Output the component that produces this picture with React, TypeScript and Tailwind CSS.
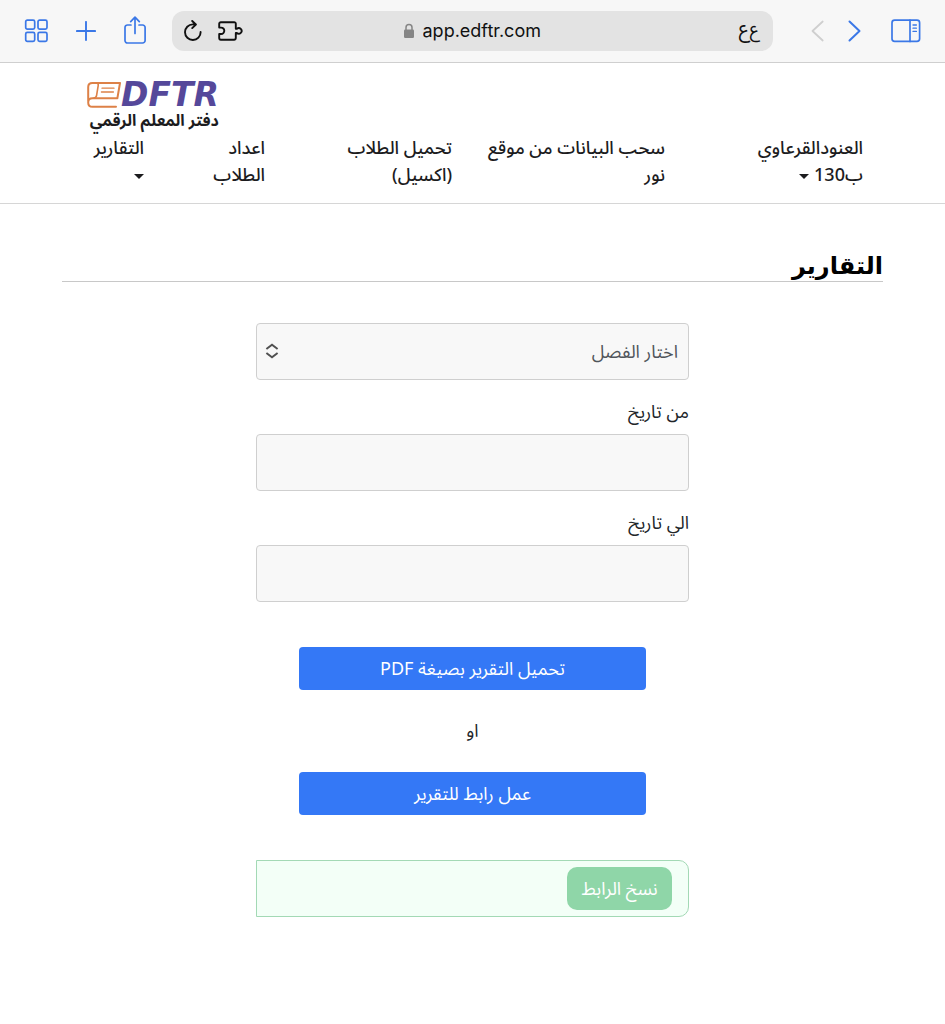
import type { ReactNode } from 'react';

const FieldLabel = ({ htmlFor, children }: { htmlFor: string; children: ReactNode }) => (
  <label htmlFor={htmlFor} className="block text-lg leading-6 text-[#212529] mt-5 mb-[10px]">
    {children}
  </label>
);

const Caret = () => (
  <span className="inline-block align-middle border-x-[5px] border-x-transparent border-t-[5px] border-t-[#1c1c1e]" />
);

const BrowserBar = () => {
  return (
    <div dir="ltr" className="flex items-center h-[63px] px-6 bg-[#f7f7f7] border-b border-[#cfcfcf] text-[#3b78e7]">
      {/* Left controls */}
      <button type="button" aria-label="Tabs">
        <svg width="24" height="24" viewBox="0 0 24 24" fill="none" stroke="currentColor" strokeWidth="1.7">
          <rect x="1.7" y="1.2" width="9" height="9" rx="1.6" />
          <rect x="14" y="1.2" width="9" height="9" rx="1.6" />
          <rect x="1.7" y="13.4" width="9" height="9" rx="1.6" />
          <rect x="14" y="13.4" width="9" height="9" rx="1.6" />
        </svg>
      </button>
      <button type="button" aria-label="New tab" className="ml-7">
        <svg width="20" height="20" viewBox="0 0 20 20" fill="none" stroke="currentColor" strokeWidth="1.9" strokeLinecap="round">
          <path d="M10 .9v18.2M.9 10h18.2" />
        </svg>
      </button>
      <button type="button" aria-label="Share" className="ml-7">
        <svg width="22" height="30" viewBox="0 0 22 30" fill="none" stroke="currentColor" strokeWidth="1.7" strokeLinecap="round" strokeLinejoin="round">
          <path d="M7 9H3.6A2.5 2.5 0 0 0 1 11.5v13A2.5 2.5 0 0 0 3.6 27h15a2.5 2.5 0 0 0 2.5-2.5v-13a2.5 2.5 0 0 0-2.5-2.5H15" />
          <path d="M11 17.5V1.4M6.7 5.6 11 1.2l4.3 4.4" />
        </svg>
      </button>

      {/* Address bar */}
      <div className="grid grid-cols-[1fr_auto_1fr] items-center flex-1 h-10 ml-[26px] px-3 rounded-xl bg-[#e3e3e3] text-[#111]">
        <div className="flex items-center gap-4">
          <button type="button" aria-label="Reload">
            <svg width="18" height="22" viewBox="0 0 18 22" fill="none" stroke="currentColor" strokeWidth="1.9" strokeLinecap="round" strokeLinejoin="round">
              <path d="M16.6 12A7.8 7.8 0 1 1 8.8 4.4h3M8.2 1l3.7 3.5-3.7 3.6" />
            </svg>
          </button>
          <button type="button" aria-label="Extensions">
            <svg width="25" height="20" viewBox="0 0 25 20" fill="none" stroke="currentColor" strokeWidth="1.9" strokeLinejoin="round">
              <path d="M1.2 6.6V2.8A1.6 1.6 0 0 1 2.8 1.2h13.4a1.6 1.6 0 0 1 1.6 1.6v5h1.1a2.8 2.8 0 1 1 0 4.2h-1.1v5.1a1.6 1.6 0 0 1-1.6 1.6H2.8a1.6 1.6 0 0 1-1.6-1.6V13h1.9a3 3 0 1 0 0-6.4z" />
            </svg>
          </button>
        </div>
        <div className="flex items-center gap-2">
          <svg width="12" height="16" viewBox="0 0 12 16" fill="none">
            <rect x="1" y="6.6" width="10" height="8.4" rx="1.2" fill="#858585" />
            <path d="M3 7V4.4a3 3 0 0 1 6 0V7" stroke="#858585" strokeWidth="1.5" />
          </svg>
          <input
            type="text"
            aria-label="Address"
            defaultValue="app.edftr.com"
            className="w-[120px] bg-transparent text-lg leading-6 font-[Inter,sans-serif] outline-none"
          />
        </div>
        <button type="button" dir="rtl" aria-label="Page settings" className="flex items-center gap-px pr-[2px] pb-1 justify-self-end leading-6">
          <span className="text-lg">ع</span>
          <span className="text-xl">ع</span>
        </button>
      </div>

      {/* Right controls */}
      <button type="button" aria-label="Back" className="ml-[38px] text-[#cfcfcf]">
        <svg width="13" height="22" viewBox="0 0 13 22" fill="none" stroke="currentColor" strokeWidth="1.8" strokeLinecap="round" strokeLinejoin="round">
          <path d="M11.7 1.5 1.5 11l10.2 9.5" />
        </svg>
      </button>
      <button type="button" aria-label="Forward" className="ml-6">
        <svg width="13" height="22" viewBox="0 0 13 22" fill="none" stroke="currentColor" strokeWidth="2" strokeLinecap="round" strokeLinejoin="round">
          <path d="M1.5 1.5 11.5 11l-10 9.5" />
        </svg>
      </button>
      <button type="button" aria-label="Sidebar" className="ml-[30px]">
        <svg width="30" height="24" viewBox="0 0 30 24" fill="none" stroke="currentColor" strokeWidth="1.7" strokeLinecap="round">
          <rect x="1" y="1.2" width="27.6" height="21.2" rx="2.6" />
          <path d="M19 1.2v21.2" />
          <path d="M22 6h3.4M22 9.2h3.4M22 12.4h3.4" strokeWidth="1.3" />
        </svg>
      </button>
    </div>
  );
};

const Logo = () => (
  <a href="#" aria-label="EDFTR" className="block w-fit">
    <span dir="ltr" className="flex items-center h-7">
      <svg width="34" height="28" viewBox="0 0 34 28" fill="none" stroke="#dd8147" strokeWidth="2" strokeLinecap="round" strokeLinejoin="round">
        <path d="M30.4 17.2 33 2H5.4Q1.2 2 1.2 6v14.4M30.4 17.2H5.4C2.6 17.2 1.2 19 1.2 21.4s1.5 4.4 4.2 4.4H29" />
        <path d="M9.2 2Q11.6 2 11.2 4.6L9.6 14.4Q9.2 17.2 6.4 17.2" strokeWidth="1.6" />
        <path d="M15 7.2h12M14.4 11h12" strokeWidth="1.3" />
      </svg>
      <span className="text-[33px] leading-7 font-bold italic text-[#55489a] font-['DejaVu_Sans',sans-serif]">DFTR</span>
    </span>
    <span className="block text-base leading-6 font-bold text-[#1c1c1e]">دفتر المعلم الرقمي</span>
  </a>
);

const navLinks = [
  { lines: ['سحب البيانات من موقع', 'نور'] },
  { lines: ['تحميل الطلاب', '(اكسيل)'] },
  { lines: ['اعداد', 'الطلاب'] },
];

const Header = () => {
  return (
    <header className="border-b border-[#d6d6d6] pt-[18px] pb-[14px] pr-[82px] pl-[87px]">
      <div className="flex justify-end">
        <Logo />
      </div>
      <nav className="grid grid-cols-[198fr_213fr_187fr_121fr_57fr] pt-[2px] text-lg leading-[27px] font-medium text-[#1c1c1e] whitespace-nowrap">
        <a href="#">
          العنودالقرعاوي
          <br />
          ب130 <Caret />
        </a>
        {navLinks.map((link) => (
          <a key={link.lines[0]} href="#">
            {link.lines[0]}
            <br />
            {link.lines[1]}
          </a>
        ))}
        <a href="#">
          التقارير
          <br />
          <Caret />
        </a>
      </nav>
    </header>
  );
};

const App = () => {
  return (
    <div dir="rtl" className="min-h-screen bg-white font-['Noto_Sans_Arabic','Noto_Sans','DejaVu_Sans',sans-serif]">
      <BrowserBar />
      <Header />

      <main className="px-[62px] pt-12">
        <h1 className="border-b border-[#c8c8c8] text-2xl leading-[29px] font-bold text-black font-['DejaVu_Sans',sans-serif]">
          التقارير
        </h1>

        <form className="w-full max-w-[433px] mx-auto pt-[41px]">
          <div className="relative">
            <select
              aria-label="اختار الفصل"
              className="appearance-none block w-full h-[57px] px-[10px] rounded border border-[#cfcfcf] bg-[#f8f8f8] text-lg text-[#50555b]"
            >
              <option>اختار الفصل</option>
            </select>
            <svg className="absolute left-[9px] top-5 pointer-events-none" width="14" height="16" viewBox="0 0 14 16" fill="none" stroke="#505050" strokeWidth="2">
              <path d="M1.4 6 7 1.8 12.6 6M1.4 10 7 14.2 12.6 10" />
            </svg>
          </div>

          <FieldLabel htmlFor="from">من تاريخ</FieldLabel>
          <input id="from" type="text" className="block w-full h-[57px] px-[10px] rounded border border-[#cfcfcf] bg-[#f8f8f8]" />

          <FieldLabel htmlFor="to">الي تاريخ</FieldLabel>
          <input id="to" type="text" className="block w-full h-[57px] px-[10px] rounded border border-[#cfcfcf] bg-[#f8f8f8]" />

          {/* Actions */}
          <div className="flex flex-col items-center pt-[45px] text-lg">
            <button type="button" className="w-4/5 h-[43px] rounded bg-[#3478f6] text-white">
              تحميل التقرير بصيغة PDF
            </button>
            <p className="my-7 leading-[26px] text-[#212529]">او</p>
            <button type="button" className="w-4/5 h-[43px] rounded bg-[#3478f6] text-white">
              عمل رابط للتقرير
            </button>
          </div>

          {/* Share link */}
          <div className="flex items-center h-[57px] mt-[45px] pr-4 rounded-r-[10px] border border-[#a3d9b5] bg-[#f3fff7]">
            <button type="button" className="w-[105px] h-[43px] rounded-[10px] bg-[#8fd6a8] text-lg text-white">
              نسخ الرابط
            </button>
          </div>
        </form>
      </main>
    </div>
  );
};

export default App;
